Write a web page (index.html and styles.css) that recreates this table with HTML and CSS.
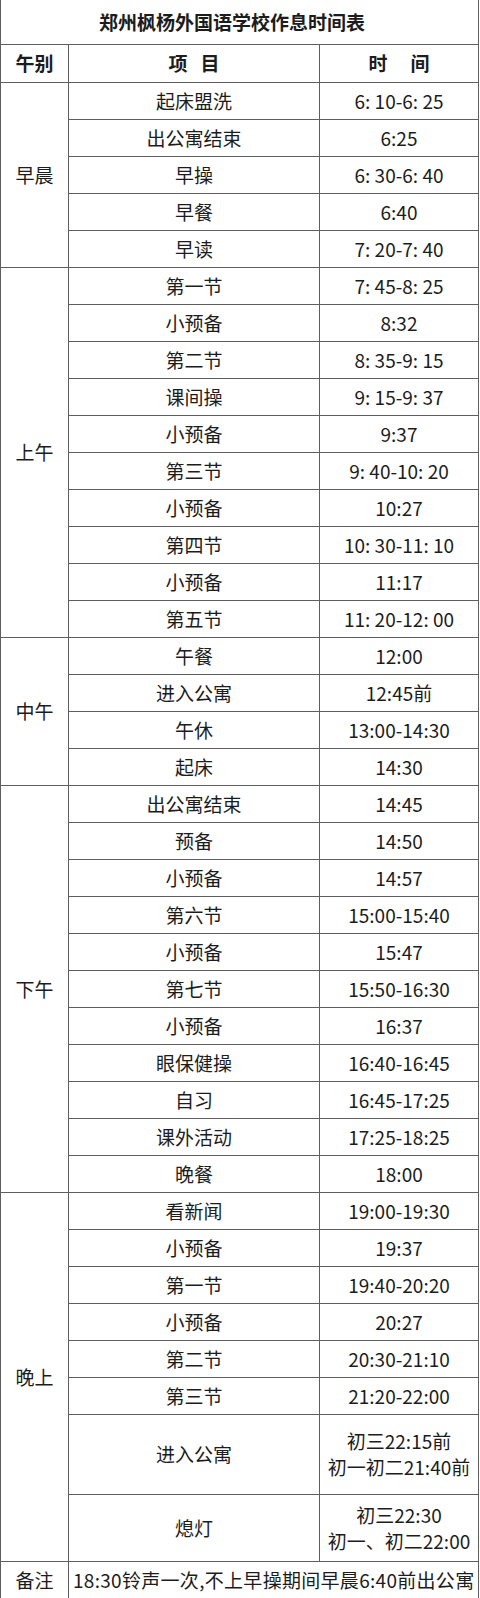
FILE: index.html
```html
<!DOCTYPE html>
<html lang="zh-CN">
<head>
<meta charset="utf-8">
<title>郑州枫杨外国语学校作息时间表</title>
<link rel="stylesheet" href="styles.css">
</head>
<body>
<table class="schedule">
  <colgroup>
    <col class="col-period">
    <col class="col-item">
    <col class="col-time">
  </colgroup>
  <thead>
    <tr class="title-row"><th colspan="3" class="title">郑州枫杨外国语学校作息时间表</th></tr>
    <tr class="head-row">
      <th>午别</th>
      <th>项<span class="gap-sm"></span>目</th>
      <th>时<span class="gap-lg"></span>间</th>
    </tr>
  </thead>
  <tbody>
    <tr><td rowspan="5" class="period">早晨</td><td>起床盟洗</td><td>6: 10-6: 25</td></tr>
    <tr><td>出公寓结束</td><td>6:25</td></tr>
    <tr><td>早操</td><td>6: 30-6: 40</td></tr>
    <tr><td>早餐</td><td>6:40</td></tr>
    <tr><td>早读</td><td>7: 20-7: 40</td></tr>

    <tr><td rowspan="10" class="period">上午</td><td>第一节</td><td>7: 45-8: 25</td></tr>
    <tr><td>小预备</td><td>8:32</td></tr>
    <tr><td>第二节</td><td>8: 35-9: 15</td></tr>
    <tr><td>课间操</td><td>9: 15-9: 37</td></tr>
    <tr><td>小预备</td><td>9:37</td></tr>
    <tr><td>第三节</td><td>9: 40-10: 20</td></tr>
    <tr><td>小预备</td><td>10:27</td></tr>
    <tr><td>第四节</td><td>10: 30-11: 10</td></tr>
    <tr><td>小预备</td><td>11:17</td></tr>
    <tr><td>第五节</td><td>11: 20-12: 00</td></tr>

    <tr><td rowspan="4" class="period">中午</td><td>午餐</td><td>12:00</td></tr>
    <tr><td>进入公寓</td><td>12:45前</td></tr>
    <tr><td>午休</td><td>13:00-14:30</td></tr>
    <tr><td>起床</td><td>14:30</td></tr>

    <tr><td rowspan="11" class="period">下午</td><td>出公寓结束</td><td>14:45</td></tr>
    <tr><td>预备</td><td>14:50</td></tr>
    <tr><td>小预备</td><td>14:57</td></tr>
    <tr><td>第六节</td><td>15:00-15:40</td></tr>
    <tr><td>小预备</td><td>15:47</td></tr>
    <tr><td>第七节</td><td>15:50-16:30</td></tr>
    <tr><td>小预备</td><td>16:37</td></tr>
    <tr><td>眼保健操</td><td>16:40-16:45</td></tr>
    <tr><td>自习</td><td>16:45-17:25</td></tr>
    <tr><td>课外活动</td><td>17:25-18:25</td></tr>
    <tr><td>晚餐</td><td>18:00</td></tr>

    <tr><td rowspan="8" class="period">晚上</td><td>看新闻</td><td>19:00-19:30</td></tr>
    <tr><td>小预备</td><td>19:37</td></tr>
    <tr><td>第一节</td><td>19:40-20:20</td></tr>
    <tr><td>小预备</td><td>20:27</td></tr>
    <tr><td>第二节</td><td>20:30-21:10</td></tr>
    <tr><td>第三节</td><td>21:20-22:00</td></tr>
    <tr class="tall-row"><td>进入公寓</td><td class="multi">初三22:15前<br>初一初二21:40前</td></tr>
    <tr class="mid-row"><td>熄灯</td><td class="multi">初三22:30<br>初一、初二22:00</td></tr>

    <tr class="note-row"><td class="period">备注</td><td colspan="2" class="note">18:30铃声一次,不上早操期间早晨6:40前出公寓</td></tr>
  </tbody>
</table>
</body>
</html>
```
FILE: styles.css
```css
html, body {
  margin: 0;
  padding: 0;
  background: #ffffff;
}

body {
  width: 480px;
  font-family: "Noto Sans CJK SC", "Noto Sans", sans-serif;
  color: #1c1c1c;
}

.schedule {
  width: 478px;
  table-layout: fixed;
  border-collapse: collapse;
  font-size: 19px;
}

.col-period { width: 68px; }
.col-item { width: 251px; }
.col-time { width: 159px; }

.schedule th,
.schedule td {
  border: 1px solid #5e5e5e;
  padding: 0;
  text-align: center;
  vertical-align: middle;
  line-height: 24px;
  white-space: nowrap;
}

.schedule tr { height: 37px; }

.schedule .title-row { height: 44px; }
.schedule .title {
  border-top: none;
  font-weight: 700;
  padding-right: 15px;
}

.schedule .head-row { height: 38px; }
.schedule .head-row th { font-weight: 700; }

.gap-sm {
  display: inline-block;
  width: 13px;
}
.gap-lg {
  display: inline-block;
  width: 23px;
}

.schedule .tall-row { height: 80px; }
.schedule .mid-row { height: 67px; }

.schedule .multi { line-height: 26px; }

.schedule .note {
  text-align: left;
  padding-left: 4px;
  letter-spacing: 0.3px;
}
```
